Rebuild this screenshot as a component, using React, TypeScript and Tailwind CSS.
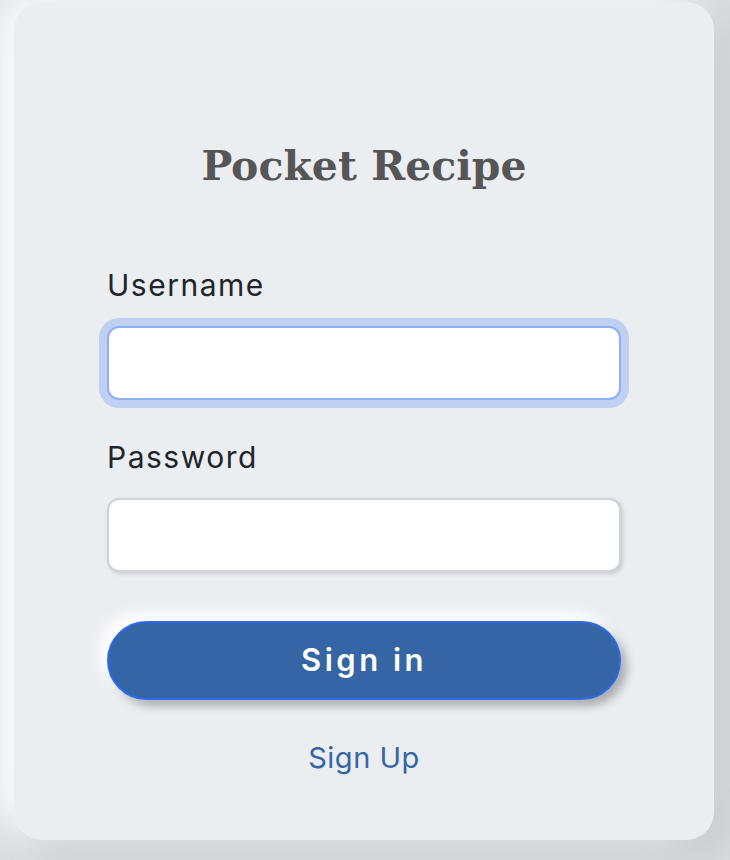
export default function App() {
  return (
    <div className="min-h-screen w-full overflow-hidden bg-[#d9dbde] pl-[14px] pt-[2px]">
      <div
        className="flex h-[838px] w-[700px] flex-col rounded-[28px] bg-[#ebeef1] px-[93px] pt-[136px] shadow-[-22px_-10px_40px_#fbfcfc,16px_16px_30px_#c9cbcf]"
      >
        <h1 className="text-center font-['DejaVu_Serif',serif] text-[41px] font-bold leading-[56px] text-[#555555]">
          Pocket Recipe
        </h1>

        <label className="mt-[72px] font-['Inter',sans-serif] text-[30px] leading-[38px] tracking-[1.5px] text-[#212529]">
          Username
        </label>
        <input
          type="text"
          className="mt-[22px] h-[74px] w-full rounded-[12px] border-2 border-[#8db0f3] bg-white outline-none ring-[8px] ring-[#c0d0f2]"
        />

        <label className="mt-[38px] font-['Inter',sans-serif] text-[30px] leading-[38px] tracking-[1.5px] text-[#212529]">
          Password
        </label>
        <input
          type="password"
          className="mt-[22px] h-[74px] w-full rounded-[12px] border-2 border-[#cfd2d6] bg-white outline-none shadow-[2px_2px_4px_#c9ccd0]"
        />

        <button className="mt-[49px] h-[79px] w-full rounded-full border-2 border-[#2e6ae8] bg-[#3565a4] font-['Inter',sans-serif] text-[31px] font-semibold tracking-[3.5px] text-white shadow-[-8px_-8px_14px_#ffffff,6px_6px_10px_#a9abae]">
          Sign in
        </button>

        <a className="mt-[40px] text-center font-['Inter',sans-serif] text-[29px] leading-[36px] tracking-[0.5px] text-[#3565a4]">
          Sign Up
        </a>
      </div>
    </div>
  );
}
